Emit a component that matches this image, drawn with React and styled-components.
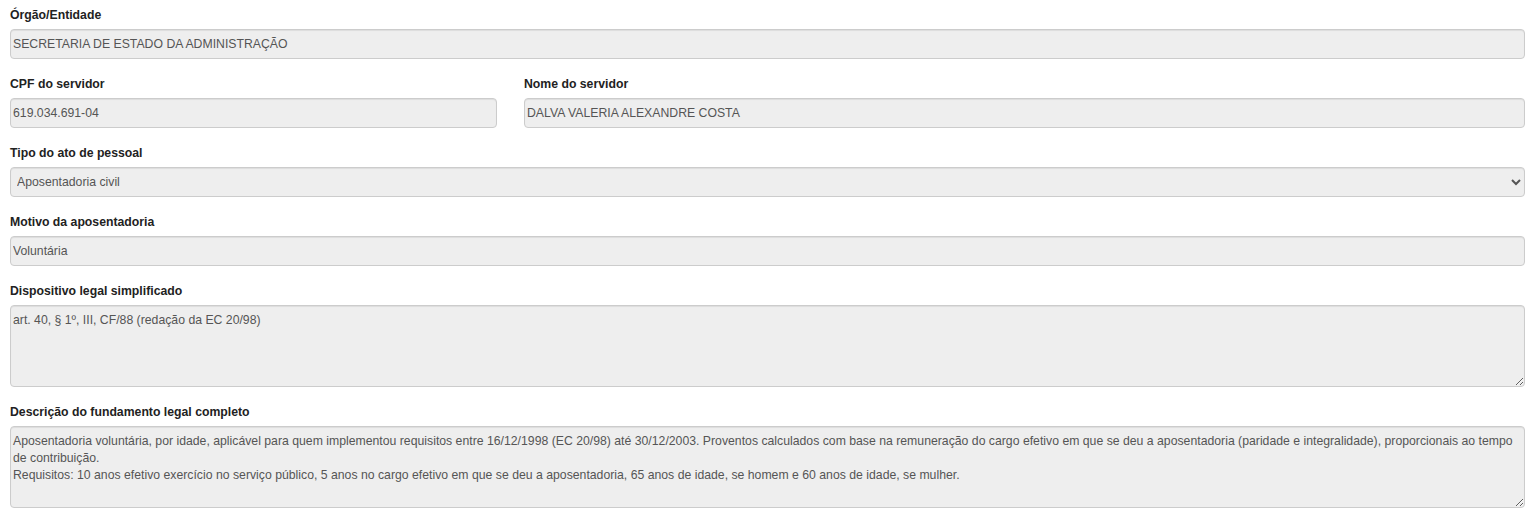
import React from 'react';
import styled, { createGlobalStyle } from 'styled-components';

const GlobalStyle = createGlobalStyle`
  html, body {
    margin: 0;
    padding: 0;
    background: #fff;
  }
  body {
    font-family: 'Liberation Sans', Arial, sans-serif;
    font-size: 12.25px;
    color: #333;
  }
`;

const Form = styled.form`
  padding: 7px 11px 0 10px;
`;

const Row = styled.div`
  display: grid;
  grid-template-columns: 487fr 1001fr;
  column-gap: 27px;
`;

const Group = styled.div`
  margin-bottom: 17px;
  min-width: 0;
`;

const Label = styled.label`
  display: block;
  font-weight: bold;
  font-size: 12.25px;
  line-height: 17px;
  color: #222;
  margin-bottom: 5px;
`;

const fieldBase = `
  display: block;
  width: 100%;
  box-sizing: border-box;
  font-family: 'Liberation Sans', Arial, sans-serif;
  font-size: 12.25px;
  line-height: 17px;
  color: #555;
  background-color: #eee;
  border: 1px solid #ccc;
  border-radius: 4px;
  box-shadow: inset 0 1px 1px rgba(0, 0, 0, 0.075);
  outline: none;
  margin: 0;
`;

const Input = styled.input`
  ${fieldBase}
  height: 30px;
  padding: 5px 2px;
`;

const Select = styled.select`
  ${fieldBase}
  height: 30px;
  padding: 5px 2px;
`;

const TextArea = styled.textarea`
  ${fieldBase}
  height: 82px;
  padding: 6px 2px;
  resize: vertical;
`;

const Field = ({ label, children }) => (
  <Group>
    <Label>{label}</Label>
    {children}
  </Group>
);

const descricao =
  'Aposentadoria voluntária, por idade, aplicável para quem implementou requisitos entre 16/12/1998 (EC 20/98) até 30/12/2003. Proventos calculados com base na remuneração do cargo efetivo em que se deu a aposentadoria (paridade e integralidade), proporcionais ao tempo de contribuição.\nRequisitos: 10 anos efetivo exercício no serviço público, 5 anos no cargo efetivo em que se deu a aposentadoria, 65 anos de idade, se homem e 60 anos de idade, se mulher.';

export default function App() {
  return (
    <>
      <GlobalStyle />
      <Form onSubmit={e => e.preventDefault()}>
        <Field label="Órgão/Entidade">
          <Input readOnly value="SECRETARIA DE ESTADO DA ADMINISTRAÇÃO" />
        </Field>
        <Row>
          <Field label="CPF do servidor">
            <Input readOnly value="619.034.691-04" />
          </Field>
          <Field label="Nome do servidor">
            <Input readOnly value="DALVA VALERIA ALEXANDRE COSTA" />
          </Field>
        </Row>
        <Field label="Tipo do ato de pessoal">
          <Select defaultValue="civil">
            <option value="civil">Aposentadoria civil</option>
          </Select>
        </Field>
        <Field label="Motivo da aposentadoria">
          <Input readOnly value="Voluntária" />
        </Field>
        <Field label="Dispositivo legal simplificado">
          <TextArea readOnly value="art. 40, § 1º, III, CF/88 (redação da EC 20/98)" />
        </Field>
        <Field label="Descrição do fundamento legal completo">
          <TextArea readOnly value={descricao} />
        </Field>
      </Form>
    </>
  );
}
